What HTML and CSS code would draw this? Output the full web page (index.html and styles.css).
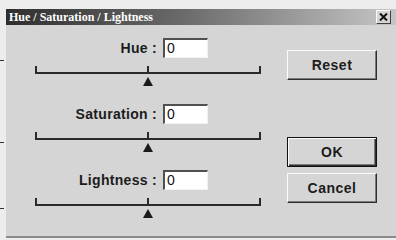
FILE: index.html
```html
<!DOCTYPE html>
<html>
<head>
<meta charset="utf-8">
<link rel="stylesheet" href="styles.css">
</head>
<body>
<div class="page">
  <div class="gutter">
    <span class="mark m1"></span>
    <span class="mark m2"></span>
    <span class="mark m3"></span>
  </div>
  <div class="dialog">
    <div class="titlebar">
      <span class="title">Hue / Saturation / Lightness</span>
      <div class="close">
        <svg width="9" height="8" viewBox="0 0 9 8"><path d="M1 0.5 L8 7.5 M8 0.5 L1 7.5" stroke="#111" stroke-width="2"/></svg>
      </div>
    </div>
    <div class="content">
      <div class="sliders">
        <div class="group">
          <div class="field"><span class="label">Hue :</span><div class="input">0</div></div>
          <svg class="slider" width="226" height="20" viewBox="0 0 226 20"><rect x="0" y="6" width="226" height="2" fill="#2a2a2a"/><rect x="0" y="0" width="2" height="8" fill="#2a2a2a"/><rect x="224" y="0" width="2" height="8" fill="#2a2a2a"/><rect x="112" y="0" width="2" height="8" fill="#2a2a2a"/><polygon points="113,11 108,20 118,20" fill="#1a1a1a"/></svg>
        </div>
        <div class="group">
          <div class="field"><span class="label">Saturation :</span><div class="input">0</div></div>
          <svg class="slider" width="226" height="20" viewBox="0 0 226 20"><rect x="0" y="6" width="226" height="2" fill="#2a2a2a"/><rect x="0" y="0" width="2" height="8" fill="#2a2a2a"/><rect x="224" y="0" width="2" height="8" fill="#2a2a2a"/><rect x="112" y="0" width="2" height="8" fill="#2a2a2a"/><polygon points="113,11 108,20 118,20" fill="#1a1a1a"/></svg>
        </div>
        <div class="group">
          <div class="field"><span class="label">Lightness :</span><div class="input">0</div></div>
          <svg class="slider" width="226" height="20" viewBox="0 0 226 20"><rect x="0" y="6" width="226" height="2" fill="#2a2a2a"/><rect x="0" y="0" width="2" height="8" fill="#2a2a2a"/><rect x="224" y="0" width="2" height="8" fill="#2a2a2a"/><rect x="112" y="0" width="2" height="8" fill="#2a2a2a"/><polygon points="113,11 108,20 118,20" fill="#1a1a1a"/></svg>
        </div>
      </div>
      <div class="buttons">
        <div class="btn reset">Reset</div>
        <div class="btn ok">OK</div>
        <div class="btn cancel">Cancel</div>
      </div>
    </div>
  </div>
</div>
</body>
</html>
```
FILE: styles.css
```css
html, body {
  margin: 0;
  padding: 0;
}
body {
  background: #ededed;
  font-family: "Liberation Sans", Arial, sans-serif;
  width: 396px;
  height: 240px;
  overflow: hidden;
}
.page {
  display: flex;
  padding-top: 9px;
}
.gutter {
  width: 6px;
  flex-shrink: 0;
  display: flex;
  flex-direction: column;
}
.mark {
  display: block;
  width: 4px;
  height: 1px;
  background: #333;
}
.m1 { margin-top: 51px; }
.m2 { margin-top: 81px; }
.m3 { margin-top: 65px; }
.dialog {
  width: 390px;
  height: 229px;
  box-sizing: border-box;
  background: #d5d5d5;
  border-bottom: 2px solid #8a8a8a;
}
.titlebar {
  height: 16px;
  background: linear-gradient(to right, #2e2e2e 0%, #6a6a6a 45%, #c6c6c6 100%);
  display: flex;
  align-items: center;
  justify-content: space-between;
  padding: 0 5px 0 3px;
}
.title {
  color: #fff;
  font-family: "Liberation Serif", "Times New Roman", serif;
  font-weight: bold;
  font-size: 12px;
  line-height: 16px;
}
.close {
  width: 15px;
  height: 14px;
  box-sizing: border-box;
  background: #d5d5d5;
  border: 1px solid;
  border-color: #fff #404040 #404040 #fff;
  display: flex;
  align-items: center;
  justify-content: center;
}
.content {
  display: flex;
}
.sliders {
  padding-left: 29px;
  padding-top: 13px;
}
.group {
  margin-bottom: 18px;
}
.field {
  width: 226px;
  box-sizing: border-box;
  padding-right: 53px;
  display: flex;
  justify-content: flex-end;
  align-items: center;
  gap: 6px;
  height: 20px;
}
.label {
  font-weight: bold;
  font-size: 14px;
  letter-spacing: 0.3px;
  color: #1c1c1c;
}
.input {
  width: 45px;
  height: 20px;
  box-sizing: border-box;
  background: #fff;
  border-top: 2px solid #505050;
  border-left: 2px solid #505050;
  border-right: 1px solid #f2f2f2;
  border-bottom: 1px solid #f2f2f2;
  font-size: 14px;
  line-height: 17px;
  padding-left: 2px;
  color: #111;
}
.slider {
  display: block;
  margin-top: 8px;
}
.buttons {
  display: flex;
  flex-direction: column;
  margin-left: 26px;
  padding-top: 25px;
}
.btn {
  width: 90px;
  height: 30px;
  box-sizing: border-box;
  background: #d5d5d5;
  border: 1px solid;
  border-color: #fbfbfb #2e2e2e #2e2e2e #fbfbfb;
  box-shadow: inset -1px -1px 0 #7a7a7a;
  display: flex;
  align-items: center;
  justify-content: center;
  font-weight: bold;
  font-size: 14px;
  letter-spacing: 0.5px;
  color: #1c1c1c;
}
.ok {
  margin-top: 57px;
  border: 1px solid #111;
  box-shadow: inset 1px 1px 0 #fbfbfb, inset -1px -1px 0 #2e2e2e, inset -2px -2px 0 #7a7a7a;
}
.cancel {
  margin-top: 6px;
}
```
